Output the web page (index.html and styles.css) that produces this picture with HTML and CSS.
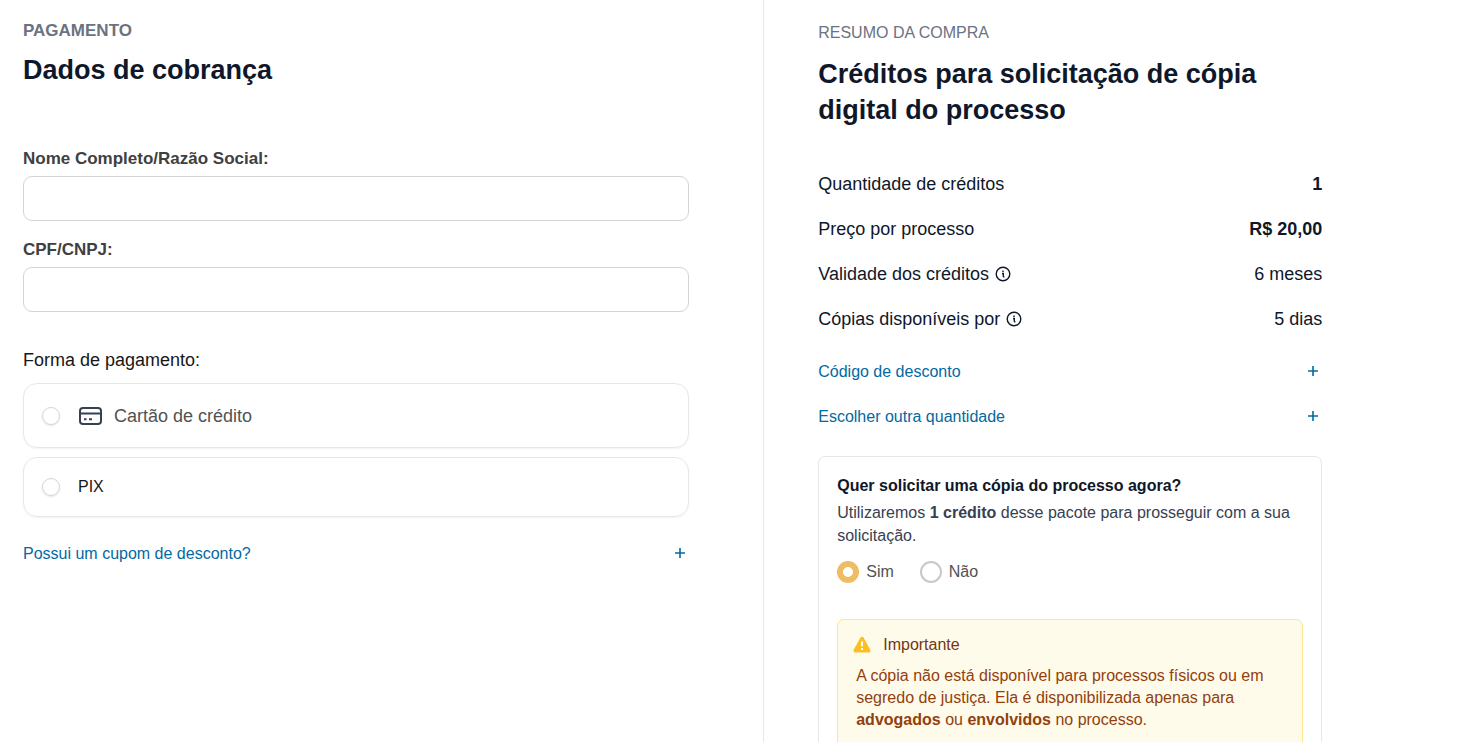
FILE: index.html
```
<!DOCTYPE html>
<html lang="pt-BR">
<head>
    <meta charset="UTF-8">
    <meta name="viewport" content="width=device-width, initial-scale=1.0">
    <title>Pagamento</title>
    <link rel="stylesheet" href="styles.css">
</head>
<body>
    <div class="checkout">
        <main class="billing">
            <p class="eyebrow eyebrow-bold">PAGAMENTO</p>
            <h1>Dados de cobrança</h1>

            <form class="billing-form">
                <div class="field">
                    <label for="nome">Nome Completo/Razão Social:</label>
                    <input type="text" id="nome" name="nome">
                </div>
                <div class="field">
                    <label for="documento">CPF/CNPJ:</label>
                    <input type="text" id="documento" name="documento">
                </div>

                <fieldset class="methods">
                    <legend>Forma de pagamento:</legend>
                    <label class="method method-card">
                        <input type="radio" name="pagamento" value="cartao">
                        <svg class="card-icon" viewBox="0 0 24 20" aria-hidden="true">
                            <rect x="2" y="2" width="21" height="16" rx="3"/>
                            <path d="M2 7.5h21M6 13.2h2.5M11 13.2h3"/>
                        </svg>
                        <span>Cartão de crédito</span>
                    </label>
                    <label class="method method-pix">
                        <input type="radio" name="pagamento" value="pix">
                        <span>PIX</span>
                    </label>
                </fieldset>

                <button type="button" class="toggle toggle-coupon">
                    <span>Possui um cupom de desconto?</span>
                    <svg class="plus" viewBox="0 0 18 18" aria-hidden="true"><path d="M9 4v10M4 9h10"/></svg>
                </button>
            </form>
        </main>

        <aside class="summary">
            <p class="eyebrow">RESUMO DA COMPRA</p>
            <h2>Créditos para solicitação de cópia digital do processo</h2>

            <dl class="items">
                <div class="item">
                    <dt>Quantidade de créditos</dt>
                    <dd class="strong">1</dd>
                </div>
                <div class="item">
                    <dt>Preço por processo</dt>
                    <dd class="strong">R$ 20,00</dd>
                </div>
                <div class="item">
                    <dt>Validade dos créditos
                        <svg class="info" viewBox="0 0 16 16" aria-hidden="true"><circle cx="8" cy="8" r="6.8"/><path d="M7 7.5h1.3v3.3M8.2 10.8h1.2M8 4.6v1.3"/></svg>
                    </dt>
                    <dd>6 meses</dd>
                </div>
                <div class="item">
                    <dt>Cópias disponíveis por
                        <svg class="info" viewBox="0 0 16 16" aria-hidden="true"><circle cx="8" cy="8" r="6.8"/><path d="M7 7.5h1.3v3.3M8.2 10.8h1.2M8 4.6v1.3"/></svg>
                    </dt>
                    <dd>5 dias</dd>
                </div>
            </dl>

            <div class="options">
                <button type="button" class="toggle">
                    <span>Código de desconto</span>
                    <svg class="plus" viewBox="0 0 18 18" aria-hidden="true"><path d="M9 4v10M4 9h10"/></svg>
                </button>
                <button type="button" class="toggle">
                    <span>Escolher outra quantidade</span>
                    <svg class="plus" viewBox="0 0 18 18" aria-hidden="true"><path d="M9 4v10M4 9h10"/></svg>
                </button>
            </div>

            <section class="request">
                <h3>Quer solicitar uma cópia do processo agora?</h3>
                <p>Utilizaremos <strong>1 crédito</strong> desse pacote para prosseguir com a sua solicitação.</p>
                <div class="answers">
                    <label><input type="radio" name="solicitar" value="sim" checked> Sim</label>
                    <label><input type="radio" name="solicitar" value="nao"> Não</label>
                </div>

                <div class="alert">
                    <div class="alert-title">
                        <svg class="warning" viewBox="0 0 18 18" aria-hidden="true">
                            <path class="warning-shape" d="M7.5 1.6a1.7 1.7 0 0 1 3 0l6.8 12.2a1.7 1.7 0 0 1-1.5 2.6H2.2a1.7 1.7 0 0 1-1.5-2.6z"/>
                            <path class="warning-mark" d="M9 5.5v4.8M9 12v2"/>
                        </svg>
                        <span>Importante</span>
                    </div>
                    <p>A cópia não está disponível para processos físicos ou em segredo de justiça. Ela é disponibilizada apenas para <strong>advogados</strong> ou <strong>envolvidos</strong> no processo.</p>
                </div>
            </section>
        </aside>
    </div>
</body>
</html>
```
FILE: styles.css
```
:root {
    --title-color: #0f172a;
    --text-color: #374151;
    --muted-color: #6b7280;
    --link-color: #0369a1;
    --border-color: #e5e7eb;
    --accent-color: #efbb63;
}

* {
    box-sizing: border-box;
}

body {
    margin: 0;
    background-color: #ffffff;
    color: var(--title-color);
    font-family: "Liberation Sans", Arial, sans-serif;
    font-size: 16px;
    line-height: 22px;
}

h1, h2, h3, p, dl, dd {
    margin: 0;
}

input, button {
    font: inherit;
}

.checkout {
    display: flex;
    height: 100vh;
}

.billing {
    width: 51.5%;
    padding: 20px 74px 20px 23px;
}

.summary {
    flex: 1;
    padding: 22px 54px;
    border-left: 1px solid var(--border-color);
    overflow-y: auto;
    scrollbar-width: none;
}

.summary > * {
    max-width: 504px;
}

.eyebrow {
    color: var(--muted-color);
}

.eyebrow-bold {
    font-size: 17px;
    font-weight: 700;
}

h1, h2 {
    font-size: 27px;
    line-height: 36px;
}

h1 {
    margin-top: 10px;
}

h2 {
    margin-top: 12px;
}

/* Billing form */

.billing-form {
    margin-top: 60px;
}

.field {
    margin-bottom: 18px;
}

.field label {
    display: block;
    margin-bottom: 6px;
    color: #404040;
    font-size: 17px;
    font-weight: 700;
}

.field input {
    display: block;
    width: 100%;
    height: 45px;
    padding: 0 14px;
    border: 1px solid #d4d4d4;
    border-radius: 9px;
}

.methods {
    display: flex;
    flex-direction: column;
    gap: 9px;
    margin: 37px 0 0;
    padding: 0;
    border: 0;
}

.methods legend {
    padding: 0 0 12px;
    color: #171717;
    font-size: 18px;
}

.method {
    display: flex;
    align-items: center;
    height: 60px;
    padding: 0 18px;
    border: 1px solid var(--border-color);
    border-radius: 14px;
    box-shadow: 0 1px 2px rgba(0, 0, 0, 0.05);
}

.method-card {
    height: 65px;
    color: #525252;
    font-size: 18px;
}

.method-pix {
    color: #171717;
}

.method input {
    appearance: none;
    width: 18px;
    height: 18px;
    margin: 0 18px 0 0;
    border: 1px solid #d1d5db;
    border-radius: 50%;
    box-shadow: 0 1px 2px rgba(0, 0, 0, 0.1);
}

.method input:checked {
    border: 5px solid var(--accent-color);
}

.card-icon {
    width: 24px;
    height: 20px;
    margin-right: 12px;
    fill: none;
    stroke: var(--text-color);
    stroke-width: 2;
}

.toggle {
    display: flex;
    align-items: center;
    justify-content: space-between;
    width: 100%;
    height: 45px;
    padding: 0;
    border: 0;
    background: none;
    color: var(--link-color);
    cursor: pointer;
}

.toggle-coupon {
    margin-top: 14px;
}

.plus {
    width: 18px;
    height: 18px;
    margin-bottom: 2px;
    fill: none;
    stroke: currentColor;
    stroke-width: 1.6;
}

/* Order summary */

.items {
    margin-top: 33px;
    font-size: 18px;
}

.item {
    display: flex;
    align-items: center;
    justify-content: space-between;
    height: 45px;
}

.item dt {
    display: flex;
    align-items: center;
    gap: 6px;
}

.strong {
    font-weight: 700;
}

.info {
    width: 16px;
    height: 16px;
    fill: none;
    stroke: currentColor;
    stroke-width: 1.4;
}

.options {
    margin-top: 8px;
}

.request {
    margin-top: 17px;
    padding: 17px 18px 18px;
    border: 1px solid var(--border-color);
    border-radius: 7px;
    color: var(--text-color);
}

.request h3 {
    color: var(--title-color);
    font-size: 16px;
    line-height: 24px;
}

.request > p {
    margin-top: 3px;
    line-height: 23px;
}

.answers {
    display: flex;
    gap: 26px;
    margin-top: 14px;
    color: #525252;
}

.answers label {
    display: flex;
    align-items: center;
    gap: 7px;
}

.answers input {
    appearance: none;
    width: 22px;
    height: 22px;
    margin: 0;
    border: 2px solid #c8c8c8;
    border-radius: 50%;
}

.answers input:checked {
    border: 6px solid var(--accent-color);
}

.alert {
    margin-top: 36px;
    padding: 14px 18px 18px;
    border: 1px solid #fde68a;
    border-radius: 7px;
    background-color: #fffbeb;
    color: #92400e;
}

.alert-title {
    display: flex;
    align-items: center;
    gap: 12px;
    margin: 0 0 9px -3px;
    color: #78350f;
}

.warning {
    width: 18px;
    height: 18px;
}

.warning-shape {
    fill: #fbbf24;
}

.warning-mark {
    fill: none;
    stroke: #ffffff;
    stroke-width: 2;
}

@media (max-width: 900px) {
    .checkout {
        flex-direction: column;
        height: auto;
    }

    .billing {
        width: 100%;
        padding: 20px 23px;
    }

    .summary {
        padding: 22px 23px;
        border-left: 0;
    }
}
```
